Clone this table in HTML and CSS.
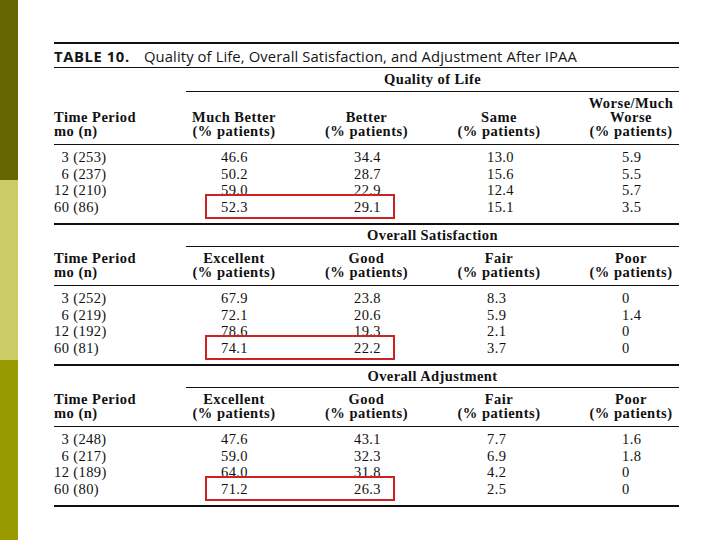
FILE: index.html
```html
<!DOCTYPE html>
<html>
<head>
<meta charset="utf-8">
<link rel="stylesheet" href="styles.css">
</head>
<body>
<div class="page">
  <div class="rail">
    <div class="stripe s1"></div>
    <div class="stripe s2"></div>
    <div class="stripe s3"></div>
  </div>
  <div class="main">
    <div class="table">
      <div class="title"><span class="tnum">TABLE 10.</span><span class="ttext">Quality of Life, Overall Satisfaction, and Adjustment After IPAA</span></div>

      <div class="section first">
        <div class="group"><span>Quality of Life</span></div>
        <div class="head">
          <div class="h c1">Time Period<br>mo (n)</div>
          <div class="h c2">Much Better<br>(% patients)</div>
          <div class="h c3">Better<br>(% patients)</div>
          <div class="h c4">Same<br>(% patients)</div>
          <div class="h c5">Worse/Much<br>Worse<br>(% patients)</div>
        </div>
        <div class="data">
          <div class="row"><span class="c1"><span class="pad"></span>3 (253)</span><span class="c2">46.6</span><span class="c3">34.4</span><span class="c4">13.0</span><span class="c5">5.9</span></div>
          <div class="row"><span class="c1"><span class="pad"></span>6 (237)</span><span class="c2">50.2</span><span class="c3">28.7</span><span class="c4">15.6</span><span class="c5">5.5</span></div>
          <div class="row"><span class="c1">12 (210)</span><span class="c2">59.0</span><span class="c3">22.9</span><span class="c4">12.4</span><span class="c5">5.7</span></div>
          <div class="row mark"><span class="c1">60 (86)</span><span class="c2">52.3</span><span class="c3">29.1</span><span class="c4">15.1</span><span class="c5">3.5</span><span class="box"></span></div>
        </div>
      </div>

      <div class="section">
        <div class="group"><span>Overall Satisfaction</span></div>
        <div class="head">
          <div class="h c1">Time Period<br>mo (n)</div>
          <div class="h c2">Excellent<br>(% patients)</div>
          <div class="h c3">Good<br>(% patients)</div>
          <div class="h c4">Fair<br>(% patients)</div>
          <div class="h c5">Poor<br>(% patients)</div>
        </div>
        <div class="data">
          <div class="row"><span class="c1"><span class="pad"></span>3 (252)</span><span class="c2">67.9</span><span class="c3">23.8</span><span class="c4">8.3</span><span class="c5">0</span></div>
          <div class="row"><span class="c1"><span class="pad"></span>6 (219)</span><span class="c2">72.1</span><span class="c3">20.6</span><span class="c4">5.9</span><span class="c5">1.4</span></div>
          <div class="row"><span class="c1">12 (192)</span><span class="c2">78.6</span><span class="c3">19.3</span><span class="c4">2.1</span><span class="c5">0</span></div>
          <div class="row mark"><span class="c1">60 (81)</span><span class="c2">74.1</span><span class="c3">22.2</span><span class="c4">3.7</span><span class="c5">0</span><span class="box"></span></div>
        </div>
      </div>

      <div class="section">
        <div class="group"><span>Overall Adjustment</span></div>
        <div class="head">
          <div class="h c1">Time Period<br>mo (n)</div>
          <div class="h c2">Excellent<br>(% patients)</div>
          <div class="h c3">Good<br>(% patients)</div>
          <div class="h c4">Fair<br>(% patients)</div>
          <div class="h c5">Poor<br>(% patients)</div>
        </div>
        <div class="data">
          <div class="row"><span class="c1"><span class="pad"></span>3 (248)</span><span class="c2">47.6</span><span class="c3">43.1</span><span class="c4">7.7</span><span class="c5">1.6</span></div>
          <div class="row"><span class="c1"><span class="pad"></span>6 (217)</span><span class="c2">59.0</span><span class="c3">32.3</span><span class="c4">6.9</span><span class="c5">1.8</span></div>
          <div class="row"><span class="c1">12 (189)</span><span class="c2">64.0</span><span class="c3">31.8</span><span class="c4">4.2</span><span class="c5">0</span></div>
          <div class="row mark"><span class="c1">60 (80)</span><span class="c2">71.2</span><span class="c3">26.3</span><span class="c4">2.5</span><span class="c5">0</span><span class="box"></span></div>
        </div>
      </div>
    </div>
  </div>
</div>
</body>
</html>
```

FILE: styles.css
```css
html, body {
  margin: 0;
  padding: 0;
  background: #ffffff;
}
.page {
  display: flex;
  width: 720px;
  height: 540px;
  overflow: hidden;
}
.rail {
  width: 18px;
  display: flex;
  flex-direction: column;
  flex: none;
}
.stripe { height: 180px; }
.s1 { background: #666600; }
.s2 { background: #cccc66; }
.s3 { background: #999900; }

.main {
  padding: 42px 0 0 36px;
}
.table {
  width: 625px;
  border-top: 2px solid #111;
  color: #111;
  font-family: "Liberation Serif", "Times New Roman", serif;
}
.title {
  height: 24px;
  padding-top: 1px;
  box-sizing: border-box;
  border-bottom: 1px solid #111;
  display: flex;
  align-items: center;
  font-family: "Open Sans", "DejaVu Sans", sans-serif;
  font-size: 14.8px;
  color: #151515;
}
.tnum {
  font-weight: 700;
  width: 90px;
  letter-spacing: 0.6px;
}
.ttext { letter-spacing: 0.1px; }
.section {
  border-bottom: 2px solid #111;
}
.group {
  height: 21px;
  margin-left: 132px;
  border-bottom: 1px solid #111;
  display: flex;
  align-items: center;
  justify-content: center;
  font-weight: 700;
  font-size: 14.5px;
  letter-spacing: 0.4px;
}
.first .group { height: 23px; }
.head, .row {
  display: grid;
  grid-template-columns: 114px 132px 133px 132px 114px;
}
.head {
  padding: 4px 0 6px;
  border-bottom: 1px solid #111;
  font-weight: 700;
  font-size: 14.5px;
  line-height: 14px;
  letter-spacing: 0.5px;
}
.h {
  align-self: end;
  text-align: center;
  white-space: nowrap;
}
.h.c1 { text-align: left; }
.h.c5 { padding-left: 18px; }
.data {
  padding: 4px 0 7.3px;
  font-size: 14.5px;
  line-height: 16.67px;
  letter-spacing: 0.4px;
}
.row { position: relative; }
.pad { display: inline-block; width: 7.5px; }
.row .c2 { padding-left: 53px; }
.row .c3 { padding-left: 54px; }
.row .c4 { padding-left: 54px; }
.row .c5 { padding-left: 57px; }
.box {
  position: absolute;
  left: 151px;
  top: -5px;
  width: 186px;
  height: 21px;
  border: 2px solid #cc2222;
}
```
